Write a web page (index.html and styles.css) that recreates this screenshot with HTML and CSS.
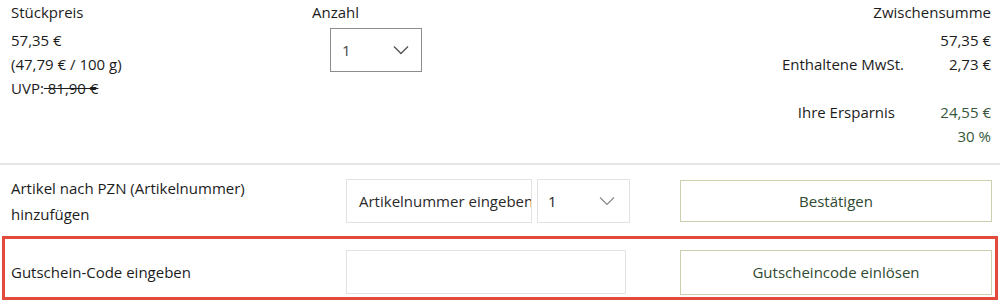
FILE: index.html
```html
<!DOCTYPE html>
<html lang="de">
<head>
<meta charset="utf-8">
<link rel="stylesheet" href="styles.css">
</head>
<body>
<div class="cart">
  <section class="summary">
    <div class="col-price">
      <div class="head">Stückpreis</div>
      <div class="line">57,35 €</div>
      <div class="line">(47,79 € / 100 g)</div>
      <div class="line">UVP:<s> 81,90 €</s></div>
    </div>
    <div class="col-qty">
      <div class="head">Anzahl</div>
      <div class="qty-select">
        <span>1</span>
        <svg class="chev" width="16" height="10" viewBox="0 0 16 10"><path d="M1 1.5 L8 8.5 L15 1.5" fill="none" stroke="#555" stroke-width="1.4"/></svg>
      </div>
    </div>
    <div class="col-total">
      <div class="head right">Zwischensumme</div>
      <div class="line right">57,35 €</div>
      <div class="pair">
        <span class="lbl">Enthaltene MwSt.</span>
        <span class="val val-a">2,73 €</span>
      </div>
      <div class="pair spaced">
        <span class="lbl">Ihre Ersparnis</span>
        <span class="val val-b green">24,55 €</span>
      </div>
      <div class="line right green">30 %</div>
    </div>
  </section>

  <div class="row pzn">
    <div class="row-label">Artikel nach PZN (Artikelnummer)<br>hinzufügen</div>
    <div class="fields">
      <div class="field field-pzn">Artikelnummer eingeben</div>
      <div class="field field-qty">
        <span>1</span>
        <svg class="chev" width="16" height="10" viewBox="0 0 16 10"><path d="M1 1.5 L8 8.5 L15 1.5" fill="none" stroke="#888" stroke-width="1.2"/></svg>
      </div>
    </div>
    <button class="btn btn-confirm">Bestätigen</button>
  </div>

  <div class="row coupon">
    <div class="row-label">Gutschein-Code eingeben</div>
    <div class="fields">
      <div class="field field-code"></div>
    </div>
    <button class="btn btn-code">Gutscheincode einlösen</button>
  </div>
</div>
</body>
</html>
```

FILE: styles.css
```css
* { box-sizing: border-box; }
html, body { margin: 0; padding: 0; background: #fff; }
body {
  font-family: "Open Sans", "Noto Sans", sans-serif;
  font-size: 15px;
  color: #1c1c1c;
  width: 1000px;
  height: 302px;
  overflow: hidden;
}
.cart { width: 1000px; }

.summary {
  display: flex;
  padding: 0 9px 0 11px;
  height: 165px;
  border-bottom: 2px solid #e6e6e6;
}
.head { line-height: 24px; height: 28px; }
.line { line-height: 24px; }
.right { text-align: right; }
.green { color: #36573a; }

.col-price { width: 301px; }
.col-qty { width: 200px; }
.qty-select {
  margin-left: 18px;
  width: 92px;
  height: 44px;
  border: 1px solid #8c8c8c;
  display: flex;
  align-items: center;
  justify-content: space-between;
  padding: 0 12px 0 11px;
  color: #444;
}
.col-total { margin-left: auto; width: 260px; }
.pair { display: flex; justify-content: flex-end; line-height: 24px; }
.pair.spaced { margin-top: 24px; }
.val { text-align: right; }
.val-a { width: 87px; }
.val-b { width: 96px; }

.row {
  display: flex;
  align-items: center;
}
.row-label { width: 335px; line-height: 26px; }
.fields { width: 284px; display: flex; gap: 5px; }
.field {
  height: 44px;
  border: 1px solid #e3e3e3;
  display: flex;
  align-items: center;
  padding: 0 10px;
  white-space: nowrap;
  overflow: hidden;
  color: #2a2a2a;
}
.field-pzn { width: 186px; padding-left: 12px; }
.field-qty { width: 93px; justify-content: space-between; padding: 0 14px 0 10px; }
.field-code { width: 280px; height: 44px; }

.btn {
  margin-left: auto;
  width: 312px;
  height: 42px;
  background: #fff;
  border: 1px solid #ccd0ad;
  font-family: inherit;
  font-size: 15px;
  color: #2f4a32;
  padding: 0;
}

.pzn {
  height: 71px;
  padding: 1px 8px 0 11px;
}
.coupon {
  margin: 0 2px;
  border: 3px solid #e24a3b;
  height: 64px;
  padding: 8px 3px 0 6px;
  align-items: center;
}
.btn-code { height: 45px; }
```
